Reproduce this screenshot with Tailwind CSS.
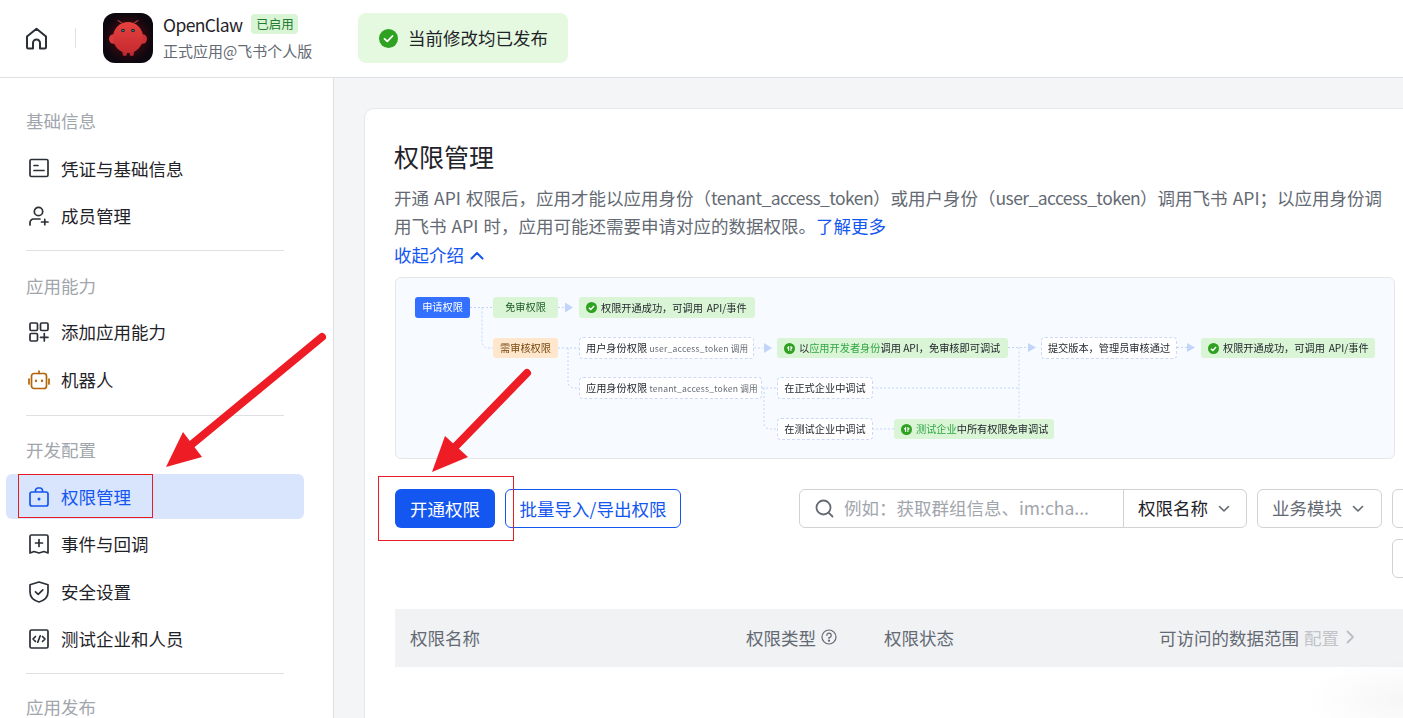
<!DOCTYPE html>
<html lang="zh-CN">
<head>
<meta charset="utf-8">
<title>权限管理</title>
<script src="https://cdn.jsdelivr.net/npm/@tailwindcss/browser@4"></script>
</head>
<body class="relative w-[1403px] h-[718px] overflow-hidden bg-white text-[#1f2329] text-[17.5px] font-['Noto_Sans_CJK_SC','Noto_Sans',sans-serif]">

<header class="h-[78px] flex items-center border-b border-[#dee0e3] bg-white pb-[1px]">
  <svg class="ml-[25px] w-[23px] h-[23px]" viewBox="0 0 23 23" fill="none" stroke="#2b2f36" stroke-width="2" stroke-linejoin="round"><path d="M2 9.5 11.500 1.800 21 9.500V20a1.500 1.500 0 0 1-1.500 1.500H15V16a3.500 3.500 0 0 0-7 0v5.500H3.500A1.500 1.500 0 0 1 2 20Z"/></svg>
  <div class="ml-[27px] w-px h-[20px] bg-[#dee0e3]"></div>
  <svg class="ml-[27px] w-[50px] h-[50px] rounded-[12px]" viewBox="0 0 50 50">
    <defs>
      <radialGradient id="lg"><stop offset="0" stop-color="#5a1218"/><stop offset="0.7" stop-color="#24090f"/><stop offset="1" stop-color="#0d0710"/></radialGradient>
      <linearGradient id="bd" x1="0" y1="0" x2="0" y2="1"><stop offset="0" stop-color="#e8403f"/><stop offset="1" stop-color="#c52b30"/></linearGradient>
    </defs>
    <rect width="50" height="50" fill="url(#lg)"/>
    <path d="M19 10 15 7.500M31 10 35 7.500" stroke="#b23a3a" stroke-width="1.100" fill="none" stroke-linecap="round"/>
    <ellipse cx="10.500" cy="26" rx="4.500" ry="4.800" fill="#d93a3c"/>
    <ellipse cx="39.500" cy="26" rx="4.500" ry="4.800" fill="#c93237"/>
    <rect x="19.500" y="36" width="4.500" height="7" rx="2.200" fill="#b52a30"/><rect x="26.500" y="36" width="4.500" height="7" rx="2.200" fill="#b52a30"/>
    <ellipse cx="25" cy="24.500" rx="15" ry="15.500" fill="url(#bd)"/>
    <circle cx="20" cy="17.500" r="1.800" fill="#0d2a2c"/><circle cx="30" cy="17.500" r="1.800" fill="#0d2a2c"/>
    <circle cx="20" cy="17.500" r="0.800" fill="#26a6a0"/><circle cx="30" cy="17.500" r="0.800" fill="#26a6a0"/>
  </svg>
  <div class="ml-[10px] w-[185px]">
    <div class="flex items-center h-[25px] mt-[-2px]">
      <span class="text-[17.5px] leading-[25px] tracking-[-0.6px]">OpenClaw</span>
      <span class="ml-[9px] w-[47px] h-[20px] rounded-[4px] bg-[#d9f5d6] text-[#237b30] text-[12.500px] leading-[20px] text-center">已启用</span>
    </div>
    <div class="mt-[2px] text-[15px] leading-[24px] text-[#646a73] whitespace-nowrap">正式应用@飞书个人版</div>
  </div>
  <div class="ml-[10px] w-[210px] h-[50px] rounded-[8px] bg-[#e4f9e0] flex items-center pl-[21px]">
    <svg class="w-[19px] h-[19px]" viewBox="0 0 19 19"><circle cx="9.500" cy="9.500" r="9.500" fill="#2ea121"/><path d="M5.500 9.800 8.300 12.400 13.500 7" fill="none" stroke="#fff" stroke-width="1.800" stroke-linecap="round" stroke-linejoin="round"/></svg>
    <span class="ml-[10px] leading-[25px] -translate-y-[1px]">当前修改均已发布</span>
  </div>
</header>

<div class="flex h-[640px]">
  <aside class="w-[334px] shrink-0 border-r border-[#dee0e3] bg-white px-[6px] pt-[9px] overflow-hidden">
    <div class="h-[58.5px] pt-[20.500px] pl-[20px] text-[#a1a5ac] leading-[25px]">基础信息</div>
    <nav class="flex flex-col gap-[2.500px]">
      <a class="flex items-center h-[45px] pl-[23px] gap-[12px]">
        <svg class="w-[20px] h-[20px]" viewBox="0 0 20 20" fill="none" stroke="#2b2f36" stroke-width="1.700" stroke-linecap="round"><rect x="1" y="1.500" width="18" height="17" rx="1.500"/><path d="M5 7.500h4M5 12.500h10"/></svg>
        <span class="leading-[25px]">凭证与基础信息</span>
      </a>
      <a class="flex items-center h-[45px] pl-[23px] gap-[12px]">
        <svg class="w-[20px] h-[20px]" viewBox="0 0 20 20" fill="none" stroke="#2b2f36" stroke-width="1.700" stroke-linecap="round"><circle cx="9.500" cy="5.500" r="4.200"/><path d="M1 19v-2.500A3.500 3.500 0 0 1 4.500 13H11M12.500 16H19M15.800 13.300v5.400"/></svg>
        <span class="leading-[25px]">成员管理</span>
      </a>
    </nav>
    <div class="mx-[20px] w-[258px] h-px bg-[#dee0e3] mt-[12px]"></div>
    <div class="h-[58.5px] pt-[21.500px] pl-[20px] text-[#a1a5ac] leading-[25px]">应用能力</div>
    <nav class="flex flex-col gap-[2.500px]">
      <a class="flex items-center h-[45px] pl-[23px] gap-[12px]">
        <svg class="w-[20px] h-[20px]" viewBox="0 0 20 20" fill="none" stroke="#2b2f36" stroke-width="1.700" stroke-linecap="round"><rect x="1" y="1" width="7.500" height="7.500" rx="1.200"/><rect x="11.500" y="1" width="7.500" height="7.500" rx="1.200"/><rect x="1" y="11.500" width="7.500" height="7.500" rx="1.200"/><path d="M11.500 15.300H19M15.300 11.500V19"/></svg>
        <span class="leading-[25px] -translate-y-[1px]">添加应用能力</span>
      </a>
      <a class="flex items-center h-[45px] pl-[23px] gap-[12px]">
        <svg class="w-[22px] h-[20px] -ml-[1px] -mr-[1px]" viewBox="0 0 22 20" fill="none" stroke="#b4630a" stroke-width="1.700" stroke-linecap="round"><rect x="3.500" y="3.500" width="15" height="15" rx="2.500"/><path d="M11 3.500V1M1 9v5M21 9v5"/><path d="M8 10.500v.6M14 10.500v.6" stroke-width="2.200"/></svg>
        <span class="leading-[25px]">机器人</span>
      </a>
    </nav>
    <div class="mx-[20px] w-[258px] h-px bg-[#dee0e3] mt-[12.500px]"></div>
    <div class="h-[58.5px] pt-[21.500px] pl-[20px] text-[#a1a5ac] leading-[25px]">开发配置</div>
    <nav class="flex flex-col gap-[2.500px]">
      <a class="flex items-center h-[45px] pl-[23px] gap-[12px] rounded-[6px] bg-[#d9e5fd] text-[#1456f0] w-[298px]">
        <svg class="w-[20px] h-[20px]" viewBox="0 0 20 20" fill="none" stroke="#1456f0" stroke-width="1.700"><rect x="1" y="5" width="18" height="14" rx="2"/><path d="M6.500 5V3.500A2.500 2.500 0 0 1 9 1h2a2.500 2.500 0 0 1 2.500 2.500V5"/><circle cx="10" cy="12" r="1.500" fill="#1456f0" stroke="none"/></svg>
        <span class="leading-[25px]">权限管理</span>
      </a>
      <a class="flex items-center h-[45px] pl-[23px] gap-[12px]">
        <svg class="w-[20px] h-[20px]" viewBox="0 0 20 20" fill="none" stroke="#2b2f36" stroke-width="1.700" stroke-linecap="round" stroke-linejoin="round"><path d="M1 2.500A1.500 1.500 0 0 1 2.500 1h15A1.500 1.500 0 0 1 19 2.500V19l-4-1.500-5 1.500-5-1.500L1 19Z"/><path d="M6.500 9h7M10 5.500v7"/></svg>
        <span class="leading-[25px] -translate-y-[1px]">事件与回调</span>
      </a>
      <a class="flex items-center h-[45px] pl-[23px] gap-[12px]">
        <svg class="w-[20px] h-[22px]" viewBox="0 0 20 22" fill="none" stroke="#2b2f36" stroke-width="1.700" stroke-linecap="round" stroke-linejoin="round"><path d="M10 1 19 3.800V11c0 5-4 8.500-9 10-5-1.500-9-5-9-10V3.800Z"/><path d="M6.500 10.800 9.200 13.300 13.800 8.800"/></svg>
        <span class="leading-[25px]">安全设置</span>
      </a>
      <a class="flex items-center h-[45px] pl-[23px] gap-[12px]">
        <svg class="w-[20px] h-[20px]" viewBox="0 0 20 20" fill="none" stroke="#2b2f36" stroke-width="1.700" stroke-linecap="round" stroke-linejoin="round"><rect x="1" y="1" width="18" height="18" rx="1.500"/><path d="M6.500 7.500 4 10l2.500 2.500M13.500 7.500 16 10l-2.500 2.500M11.200 6.800 8.800 13.200"/></svg>
        <span class="leading-[25px] -translate-y-[1px]">测试企业和人员</span>
      </a>
    </nav>
    <div class="mx-[20px] w-[258px] h-px bg-[#dee0e3] mt-[11.500px]"></div>
    <div class="h-[46px] pt-[19.500px] pl-[20px] text-[#a1a5ac] leading-[25px]">应用发布</div>
  </aside>

  <main class="relative flex-1 bg-[#f4f5f6] overflow-hidden pl-[30px] pt-[30px]">
    <div class="w-[1200px] h-[700px] bg-white border border-[#e6e8ea] rounded-tl-[10px] pl-[30px] pt-[30px]">
      <h1 class="text-[25px] leading-[35px] font-normal -ml-[1px]">权限管理</h1>
      <p class="mt-[10px] w-[1000px] -ml-[1px] text-[#646a73] leading-[28px] whitespace-nowrap [word-spacing:1.200px]">开通 API 权限后，应用才能以应用身份（<span class="tracking-[-0.58px]">tenant_access_token</span>）或用户身份（<span class="tracking-[-0.58px]">user_access_token</span>）调用飞书 API；以应用身份调<br>用飞书 API 时，应用可能还需要申请对应的数据权限。<span class="text-[#1456f0]">了解更多</span></p>
      <div class="flex items-center -ml-[1px] text-[#1456f0] leading-[30px]">收起介绍
        <svg class="ml-[6px] w-[14px] h-[9px]" viewBox="0 0 14 9" fill="none" stroke="#1456f0" stroke-width="2" stroke-linecap="round" stroke-linejoin="round"><path d="M1.500 7.500 7 2l5.500 5.500"/></svg>
      </div>

      <div class="relative w-[1000px] h-[182px] mt-[7px] border border-[#e4e6e9] rounded-[6px] bg-[#f7fbff] text-[10.2px] leading-[20px] blur-[0.35px] whitespace-nowrap overflow-hidden">
        <svg class="absolute left-[-1px] top-[-1px] w-[1000px] h-[182px]" viewBox="395 277 1000 182" fill="none" stroke="#c3d4fb" stroke-width="1" stroke-dasharray="2 2">
          <path d="M470 307.500H493M482 307.500V340a8 8 0 0 0 4 8H493M558 307.500H565M558 348H579M568 348V382a6 6 0 0 0 6 6H579M754 348H763M762 388H777M764 388V423a6 6 0 0 0 6 6H777M872 388H1019M872 429H894M1008 347.500H1026M1019 347.500V419M1177 347.500H1187"/>
          <path d="M565 302.500 573 307.500 565 312.500ZM764 343 772 348 764 353ZM1028 343 1036 347.500 1028 352ZM1187 343 1195 347.500 1187 352Z" fill="#c3d4fb" stroke="none"/>
        </svg>
        <div class="absolute left-[19px] top-[19px] w-[55px] h-[21px] rounded-[3px] bg-[#3370ff] text-white text-center">申请权限</div>
        <div class="absolute left-[97px] top-[19px] w-[65px] h-[21px] rounded-[3px] bg-[#d9f5d6] text-[#1f5c28] text-center">免审权限</div>
        <div class="absolute left-[183px] top-[19px] w-[176px] h-[21px] rounded-[3px] bg-[#d9f5d6] flex items-center pl-[7px]">
          <svg class="w-[11px] h-[11px] mr-[4px]" viewBox="0 0 19 19"><circle cx="9.500" cy="9.500" r="9.500" fill="#2ea121"/><path d="M5 9.800 8.300 13 14 7" fill="none" stroke="#fff" stroke-width="2.500"/></svg><span class="[word-spacing:1.500px]">权限开通成功，可调用 API/事件</span></div>
        <div class="absolute left-[97px] top-[60px] w-[65px] h-[20px] rounded-[3px] bg-[#fee7cd] text-[#7a4a12] text-center">需审核权限</div>
        <div class="absolute left-[183px] top-[59px] w-[175px] h-[22px] rounded-[4px] bg-white border border-dashed border-[#c9d8fb] pl-[6px] leading-[20px]">用户身份权限 <span class="text-[8.6px] tracking-[0.2px] text-[#646a73]">user_access_token 调用</span></div>
        <div class="absolute left-[183px] top-[99px] w-[183px] h-[22px] rounded-[4px] bg-white border border-dashed border-[#c9d8fb] pl-[6px] leading-[20px]">应用身份权限 <span class="text-[8.6px] tracking-[0.2px] text-[#646a73]">tenant_access_token 调用</span></div>
        <div class="absolute left-[381px] top-[60px] w-[231px] h-[20px] rounded-[3px] bg-[#d9f5d6] flex items-center pl-[7px]">
          <svg class="w-[11px] h-[11px] mr-[4px]" viewBox="0 0 19 19"><circle cx="9.500" cy="9.500" r="9.500" fill="#2ea121"/><path d="M8 5v9M12 5v9M5.500 7.500 8 10M14.500 7.500 12 10" fill="none" stroke="#fff" stroke-width="1.800"/></svg>以<span class="text-[#32a645]">应用开发者身份</span>调用 API，免审核即可调试</div>
        <div class="absolute left-[645px] top-[59px] w-[136px] h-[22px] rounded-[4px] bg-white border border-dashed border-[#c9d8fb] text-center leading-[20px]">提交版本，管理员审核通过</div>
        <div class="absolute left-[805px] top-[60px] w-[174px] h-[20px] rounded-[3px] bg-[#d9f5d6] flex items-center pl-[7px]">
          <svg class="w-[11px] h-[11px] mr-[4px]" viewBox="0 0 19 19"><circle cx="9.500" cy="9.500" r="9.500" fill="#2ea121"/><path d="M5 9.800 8.300 13 14 7" fill="none" stroke="#fff" stroke-width="2.500"/></svg><span class="[word-spacing:1.500px]">权限开通成功，可调用 API/事件</span></div>
        <div class="absolute left-[381px] top-[99px] w-[96px] h-[22px] rounded-[4px] bg-white border border-dashed border-[#c9d8fb] text-center leading-[20px]">在正式企业中调试</div>
        <div class="absolute left-[381px] top-[140px] w-[96px] h-[22px] rounded-[4px] bg-white border border-dashed border-[#c9d8fb] text-center leading-[20px]">在测试企业中调试</div>
        <div class="absolute left-[498px] top-[141px] w-[160px] h-[20px] rounded-[3px] bg-[#d9f5d6] flex items-center pl-[7px]">
          <svg class="w-[11px] h-[11px] mr-[4px]" viewBox="0 0 19 19"><circle cx="9.500" cy="9.500" r="9.500" fill="#2ea121"/><path d="M8 5v9M12 5v9M5.500 7.500 8 10M14.500 7.500 12 10" fill="none" stroke="#fff" stroke-width="1.800"/></svg><span class="text-[#32a645]">测试企业</span>中所有权限免审调试</div>
      </div>

      <div class="flex items-start mt-[30px] w-[1100px]">
        <button class="w-[100px] h-[39px] rounded-[6px] bg-[#1456f0] text-white leading-[25px]">开通权限</button>
        <button class="ml-[10px] w-[176px] h-[39px] rounded-[6px] border border-[#1456f0] text-[#1456f0] leading-[25px]">批量导入/导出权限</button>
        <div class="ml-[118px] w-[693px] shrink-0 flex flex-wrap justify-end gap-x-[10px] gap-y-[11px]">
          <div class="flex w-[448px] h-[39px]">
            <div class="w-[325px] flex items-center pl-[15px] border border-[#d0d3d6] rounded-l-[6px] text-[#a1a5ac] whitespace-nowrap overflow-hidden">
              <svg class="w-[19px] h-[19px] shrink-0 mr-[10px]" viewBox="0 0 19 19" fill="none" stroke="#646a73" stroke-width="1.800" stroke-linecap="round"><circle cx="8.500" cy="8.500" r="7"/><path d="M13.800 13.800 17.500 17.500"/></svg>例如：获取群组信息、im:cha...</div>
            <div class="w-[124px] -ml-px flex items-center pl-[14px] border border-[#d0d3d6] rounded-r-[6px] whitespace-nowrap">权限名称
              <svg class="ml-[10px] w-[12px] h-[8px]" viewBox="0 0 12 8" fill="none" stroke="#646a73" stroke-width="1.600" stroke-linecap="round" stroke-linejoin="round"><path d="M1.500 1.500 6 6l4.500-4.500"/></svg></div>
          </div>
          <div class="w-[125px] h-[39px] flex items-center pl-[14px] border border-[#d0d3d6] rounded-[6px] text-[#646a73] whitespace-nowrap">业务模块
            <svg class="ml-[10px] w-[12px] h-[8px]" viewBox="0 0 12 8" fill="none" stroke="#646a73" stroke-width="1.600" stroke-linecap="round" stroke-linejoin="round"><path d="M1.500 1.500 6 6l4.500-4.500"/></svg></div>
          <div class="w-[100px] h-[39px] border border-[#d0d3d6] rounded-[6px]"></div>
          <div class="w-[100px] h-[39px] border border-[#d0d3d6] rounded-[6px]"></div>
        </div>
      </div>

      <div class="flex items-center mt-[31px] w-[1100px] h-[58px] bg-[#f1f2f4] text-[#646a73] leading-[25px] whitespace-nowrap">
        <div class="w-[351px] pl-[15px] -translate-y-[1px]">权限名称</div>
        <div class="w-[138px] flex items-center -translate-y-[1px]">权限类型
          <svg class="ml-[5px] w-[16px] h-[16px]" viewBox="0 0 16 16" fill="none" stroke="#646a73" stroke-width="1.200" stroke-linecap="round"><circle cx="8" cy="8" r="7"/><path d="M5.800 6.300A2.200 2.200 0 1 1 8 8.500v1"/><circle cx="8" cy="11.700" r="0.500" fill="#646a73"/></svg></div>
        <div class="w-[275px] -translate-y-[1px]">权限状态</div>
        <div class="flex items-center -translate-y-[1px]">可访问的数据范围<span class="ml-[5px] text-[#c1c4c8]">配置</span>
          <svg class="ml-[7px] w-[9px] h-[14px]" viewBox="0 0 9 14" fill="none" stroke="#bbbfc4" stroke-width="1.800" stroke-linecap="round" stroke-linejoin="round"><path d="M1.500 1.500 7 7l-5.500 5.500"/></svg></div>
      </div>
    </div>
  </main>
</div>

<!-- soft glow in the lower right corner -->
<div class="absolute right-0 bottom-0 w-[100px] h-[60px] pointer-events-none bg-[radial-gradient(ellipse_at_100%_70%,rgba(0,0,0,0.035),transparent_70%)]"></div>

<!-- annotations drawn over the screenshot -->
<div class="absolute left-[18px] top-[474px] w-[135px] h-[44px] border border-[#e81c24]"></div>
<div class="absolute left-[378px] top-[476px] w-[136px] h-[65px] border border-[#e81c24]"></div>
<svg class="absolute left-0 top-0 w-[1403px] h-[718px] pointer-events-none" viewBox="0 0 1403 718">
  <path d="M322 337 191 445" stroke="#ee1c25" stroke-width="8" stroke-linecap="round" fill="none"/>
  <path d="M166 467 183 432 202 457Z" fill="#ee1c25"/>
  <path d="M527 373 455 447" stroke="#ee1c25" stroke-width="8" stroke-linecap="round" fill="none"/>
  <path d="M432 472 445 436 468 457Z" fill="#ee1c25"/>
</svg>
</body>
</html>
